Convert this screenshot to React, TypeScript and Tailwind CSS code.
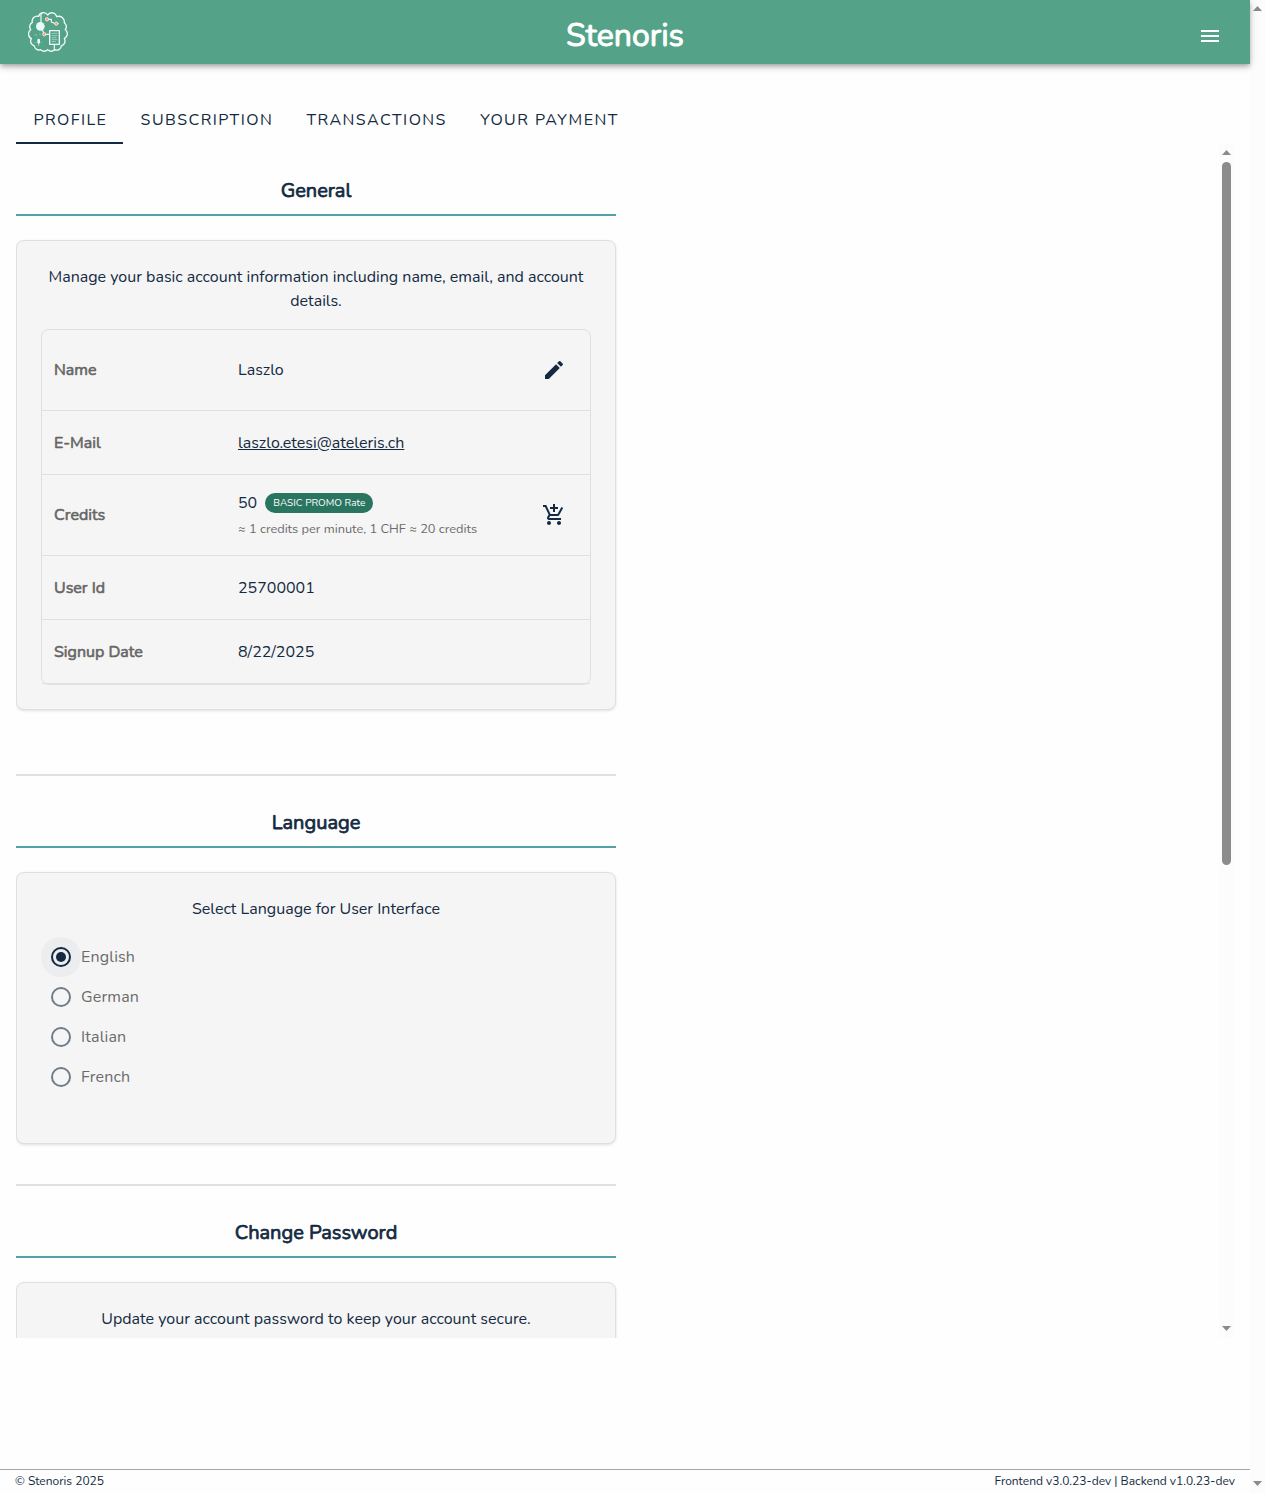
import React from "react";
import { clsx } from "clsx";
import { MdAddShoppingCart, MdEdit, MdMenu } from "react-icons/md";

const tabs = ["PROFILE", "SUBSCRIPTION", "TRANSACTIONS", "YOUR PAYMENT"];
const languages = ["English", "German", "Italian", "French"];

function Logo() {
  return (
    <svg viewBox="84 36 120 120" className="size-10" fill="none" stroke="#f0fbfb" strokeWidth="4" strokeLinecap="round" strokeLinejoin="round">
      <path d="M143 45A15 15 0 0 1 170 50A17 17 0 0 1 193 68A15 15 0 0 1 196 89A16 16 0 0 1 193 116A15 15 0 0 1 184 138A14 14 0 0 1 164 149A16 16 0 0 1 143 149A16 16 0 0 1 122 149A14 14 0 0 1 103 138A15 15 0 0 1 94 116A16 16 0 0 1 92 89A15 15 0 0 1 97 67A15 15 0 0 1 116 49A15 15 0 0 1 143 45" />
      <path d="M123 42V68M125 86L133 102M136 103H149M143 58H154V66L166 71M163 134V150" strokeWidth="3.5" />
      <circle cx="121" cy="79" r="13" fill="#e6f9fb" stroke="none" />
      <path d="M149 92H178V133H149Z" />
      <path d="M156 100H171M156 107H171M156 113H168M156 119H171M156 125H166" strokeWidth="2" stroke="#c6e5de" />
      <path d="M103 107L108 102L111 108M118 102L122 104M105 127H108M122 127H125" strokeWidth="1.5" stroke="#a4d6ca" />
      <rect x="112" y="116" width="8" height="15" rx="4" fill="#e6f9fb" stroke="none" />
      <path d="M116 130V136" strokeWidth="2" />
      <g fill="#f49a7c" stroke="#fbe4da" strokeWidth="3">
        <circle cx="141" cy="58" r="5" />
        <circle cx="169" cy="71" r="5" />
        <circle cx="133" cy="103" r="5" />
      </g>
    </svg>
  );
}

function Arrow({ down }: { down?: boolean }) {
  return (
    <svg viewBox="0 0 9 5" className={clsx("w-[9px] h-[5px] shrink-0", down && "rotate-180")} fill="#8b8b8b">
      <path d="M4.5 0L9 5H0Z" />
    </svg>
  );
}

function SectionTitle({ children }: { children: React.ReactNode }) {
  return (
    <h2 className="h-[42px] pt-px border-b-2 border-[#54a0a8] text-center text-xl leading-8 [-webkit-text-stroke:0.75px]">
      {children}
    </h2>
  );
}

function Card({ className, children }: { className?: string; children: React.ReactNode }) {
  return (
    <div className={clsx("mt-6 p-6 rounded-lg border border-[#e0e0e0] bg-[#f5f5f5] shadow-[0_1px_3px_rgba(0,0,0,0.12)]", className)}>
      {children}
    </div>
  );
}

function Row({ label, action, className, children }: { label: string; action?: React.ReactNode; className: string; children: React.ReactNode }) {
  return (
    <div className={clsx("flex items-center pl-3 pr-6 border-b border-[#e0e0e0]", className)}>
      <div className="w-[184px] text-[#666] [-webkit-text-stroke:0.6px]">{label}</div>
      <div className="flex-1">{children}</div>
      {action}
    </div>
  );
}

function Radio({ label, checked }: { label: string; checked?: boolean }) {
  return (
    <label className="flex items-center h-10 text-[#6b6b6b] tracking-[0.15px]">
      <span className={clsx("flex items-center justify-center size-10 rounded-full", checked && "bg-[#ebedee]")}>
        <span className={clsx("flex items-center justify-center size-5 rounded-full border-2", checked ? "border-[#132a42]" : "border-[#6f7d8b]")}>
          {checked && <span className="size-2.5 rounded-full bg-[#132a42]" />}
        </span>
      </span>
      {label}
    </label>
  );
}

function App() {
  return (
    <div className="flex h-[1493px] overflow-hidden bg-[#fefefe] text-[#132a42] text-base font-['Nunito','Liberation_Sans',sans-serif]">
      <div className="flex flex-col w-[1250px]">
        <header className="relative z-10 grid grid-cols-3 h-16 shrink-0 bg-[#54a388] text-white shadow-[0_2px_4px_-1px_rgba(0,0,0,0.2),0_4px_5px_rgba(0,0,0,0.14),0_1px_10px_rgba(0,0,0,0.12)]">
          <div className="pl-7 pt-3">
            <Logo />
          </div>
          <h1 className="pt-3 text-center text-[32px] leading-[48px] [-webkit-text-stroke:1px]">Stenoris</h1>
          <div className="flex justify-end pt-6 pr-7">
            <MdMenu className="size-6" />
          </div>
        </header>

        <nav className="flex h-12 mt-8 ml-4 shrink-0">
          {tabs.map((tab, i) => (
            <div
              key={tab}
              className={clsx("h-12 pl-[17.4px] pr-[15.9px] leading-[48px] tracking-[1.43px] whitespace-nowrap", i === 0 && "border-b-2 border-[#132a42]")}
            >
              {tab}
            </div>
          ))}
        </nav>

        <div className="flex justify-between h-[1194px] ml-4 mr-4 shrink-0 overflow-hidden">
          <main className="w-[600px] pt-[30px]">
            <section>
              <SectionTitle>General</SectionTitle>
              <Card>
                <p className="text-center">
                  Manage your basic account information including name, email, and account details.
                </p>
                <div className="mt-4 rounded-lg border border-[#e0e0e0]">
                  <Row label="Name" className="h-[81px]" action={<MdEdit className="size-6" />}>
                    Laszlo
                  </Row>
                  <Row label="E-Mail" className="h-16">
                    <span className="underline">laszlo.etesi@ateleris.ch</span>
                  </Row>
                  <Row label="Credits" className="h-[81px]" action={<MdAddShoppingCart className="size-6" />}>
                    <div className="flex items-center gap-2">
                      50
                      <span className="h-5 px-2 rounded-full bg-[#2a7560] text-white text-[10px] leading-5">BASIC PROMO Rate</span>
                    </div>
                    <div className="mt-1 text-[12.8px] leading-5 text-[#6b6b6b]">≈ 1 credits per minute, 1 CHF ≈ 20 credits</div>
                  </Row>
                  <Row label="User Id" className="h-16">
                    25700001
                  </Row>
                  <Row label="Signup Date" className="h-16">
                    8/22/2025
                  </Row>
                </div>
              </Card>
            </section>

            <section className="mt-16 pt-[30px] border-t-2 border-[#e0e0e0]">
              <SectionTitle>Language</SectionTitle>
              <Card className="h-[272px]">
                <p className="mb-4 text-center">Select Language for User Interface</p>
                {languages.map((lang) => (
                  <Radio key={lang} label={lang} checked={lang === "English"} />
                ))}
              </Card>
            </section>

            <section className="mt-10 pt-[30px] border-t-2 border-[#e0e0e0]">
              <SectionTitle>Change Password</SectionTitle>
              <Card className="h-[272px]">
                <p className="text-center">Update your account password to keep your account secure.</p>
              </Card>
            </section>
          </main>

          <div className="flex flex-col items-center w-[15px] pt-1.5 pb-[7px] bg-[#fcfcfc]">
            <Arrow />
            <div className="w-[9px] h-[703px] mt-[7px] rounded-full bg-[#8b8b8b]" />
            <div className="flex-1" />
            <Arrow down />
          </div>
        </div>

        <footer className="flex justify-between h-6 mt-auto px-[15px] border-t border-[#a6a6a6] text-xs leading-[23px]">
          <span>© Stenoris 2025</span>
          <span>Frontend v3.0.23-dev | Backend v1.0.23-dev</span>
        </footer>
      </div>

      <div className="flex flex-col justify-between items-center w-[15px] pt-1.5 pb-[7px] bg-[#fcfcfc]">
        <Arrow />
        <Arrow down />
      </div>
    </div>
  );
}

export default App;
